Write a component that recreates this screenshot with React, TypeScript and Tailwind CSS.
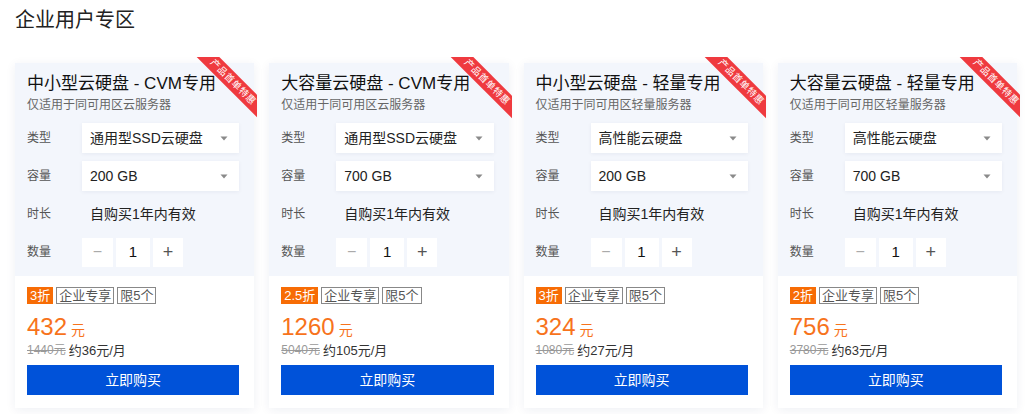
import React from "react";

type Card = {
  title: string;
  sub: string;
  type: string;
  cap: string;
  disc: string;
  price: string;
  orig: string;
  month: string;
};

const cards: Card[] = [
  { title: "中小型云硬盘 - CVM专用", sub: "仅适用于同可用区云服务器", type: "通用型SSD云硬盘", cap: "200 GB", disc: "3折", price: "432", orig: "1440元", month: "约36元/月" },
  { title: "大容量云硬盘 - CVM专用", sub: "仅适用于同可用区云服务器", type: "通用型SSD云硬盘", cap: "700 GB", disc: "2.5折", price: "1260", orig: "5040元", month: "约105元/月" },
  { title: "中小型云硬盘 - 轻量专用", sub: "仅适用于同可用区轻量服务器", type: "高性能云硬盘", cap: "200 GB", disc: "3折", price: "324", orig: "1080元", month: "约27元/月" },
  { title: "大容量云硬盘 - 轻量专用", sub: "仅适用于同可用区轻量服务器", type: "高性能云硬盘", cap: "700 GB", disc: "2折", price: "756", orig: "3780元", month: "约63元/月" },
];

const font = { fontFamily: '"Liberation Sans", "Noto Sans CJK SC", sans-serif' };

function Arrow() {
  return (
    <svg width="8" height="5" viewBox="0 0 8 5" className="mr-[3px]">
      <path d="M0.5 0.5 L7.5 0.5 L4 4.5 Z" fill="#8a8a8a" />
    </svg>
  );
}

function Select({ value }: { value: string }) {
  return (
    <div className="flex h-[30px] flex-1 items-center justify-between bg-white pl-2 pr-[8px] text-[14px] text-[#222] shadow-[0_1px_4px_rgba(0,30,90,0.06)]">
      <span>{value}</span>
      <Arrow />
    </div>
  );
}

function Row({ label, children }: { label: string; children: React.ReactNode }) {
  return (
    <div className="flex h-[30px] items-center">
      <div className="w-[55px] shrink-0 text-[12px] text-[#555]">{label}</div>
      {children}
    </div>
  );
}

function Ribbon() {
  return (
    <div className="pointer-events-none absolute -right-[3px] -top-[6px] h-[64px] w-[64px] overflow-hidden">
      <div className="absolute left-[-10.5px] top-[16.5px] flex h-[16px] w-[100px] rotate-45 items-center justify-center bg-[#ef3a3f] text-[9.5px] leading-none tracking-[0.5px] text-white">
        产品首单特惠
      </div>
    </div>
  );
}

function ProductCard({ c }: { c: Card }) {
  return (
    <div className="relative flex flex-col shadow-[0_2px_10px_rgba(20,40,100,0.07)]">
      <div className="bg-[#f3f6fc] pb-[9px] pl-3 pr-[15px] pt-[9px]">
        <div className="text-[17px] leading-[24px] text-[#111]">{c.title}</div>
        <div className="text-[12px] leading-[18px] text-[#666]">{c.sub}</div>
        <div className="mt-[9px] flex flex-col gap-2">
          <Row label="类型">
            <Select value={c.type} />
          </Row>
          <Row label="容量">
            <Select value={c.cap} />
          </Row>
          <Row label="时长">
            <div className="pl-2 text-[14px] text-[#222]">自购买1年内有效</div>
          </Row>
          <Row label="数量">
            <div className="flex h-[29px] gap-[3px]">
              <div className="flex w-[31px] items-center justify-center bg-white text-[16px] text-[#aaa]">−</div>
              <div className="flex w-[34px] items-center justify-center bg-white text-[15px] text-[#111]">1</div>
              <div className="flex w-[30px] items-center justify-center bg-white text-[18px] text-[#555]">+</div>
            </div>
          </Row>
        </div>
      </div>
      <div className="bg-white pb-[13px] pl-3 pr-[15px] pt-[11px]">
        <div className="flex h-[17px] gap-[3px] text-[13px] leading-none">
          <span className="flex items-center bg-[#f76c05] px-[3px] text-white">{c.disc}</span>
          <span className="flex items-center border border-[#888] px-[2px] text-[#555]">企业专享</span>
          <span className="flex items-center border border-[#888] px-[2px] text-[#555]">限5个</span>
        </div>
        <div className="mt-2 flex h-[30px] items-baseline text-[#f7731c]">
          <span className="text-[24px] leading-[30px]">{c.price}</span>
          <span className="ml-[4px] text-[14px]">元</span>
        </div>
        <div className="flex h-[16px] items-center gap-[3px] leading-none">
          <span className="text-[12px] text-[#999] line-through">{c.orig}</span>
          <span className="text-[13px] text-[#333]">{c.month}</span>
        </div>
        <div className="mt-[7px] flex h-[30px] items-center justify-center bg-[#0052d9] text-[14px] text-white">
          立即购买
        </div>
      </div>
      <Ribbon />
    </div>
  );
}

export default function App() {
  return (
    <div className="h-[414px] w-[1035px] bg-white" style={font}>
      <div className="px-[15px] pt-[6px]">
        <div className="text-[20px] leading-[28px] text-[#222]">企业用户专区</div>
        <div className="mt-[29px] grid w-[1002px] grid-cols-4 gap-[15px]">
          {cards.map((c) => (
            <ProductCard key={c.title} c={c} />
          ))}
        </div>
      </div>
    </div>
  );
}
